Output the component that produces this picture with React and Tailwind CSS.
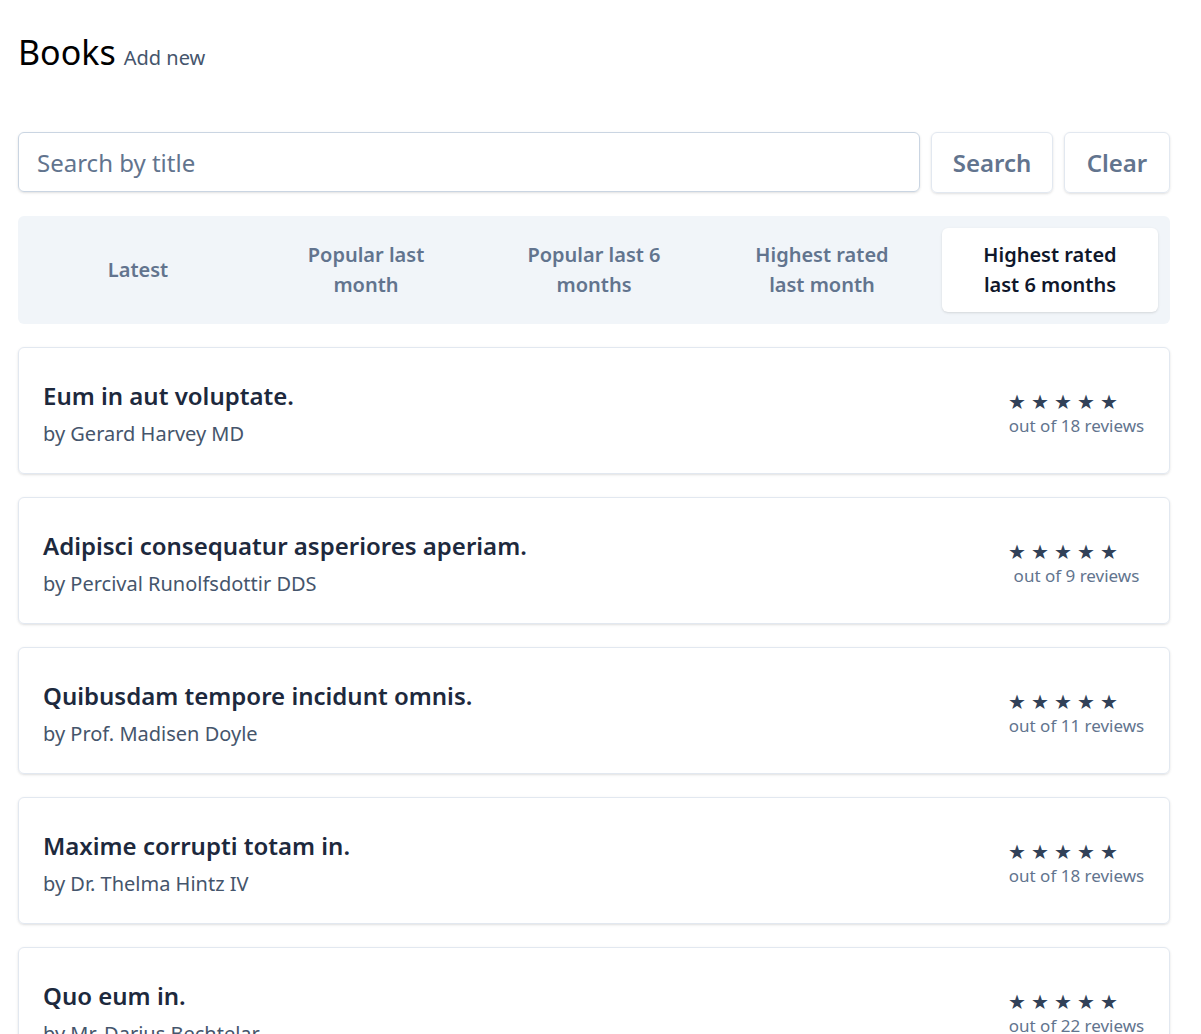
const books = [
  { title: "Eum in aut voluptate.", author: "Gerard Harvey MD", reviews: 18 },
  { title: "Adipisci consequatur asperiores aperiam.", author: "Percival Runolfsdottir DDS", reviews: 9 },
  { title: "Quibusdam tempore incidunt omnis.", author: "Prof. Madisen Doyle", reviews: 11 },
  { title: "Maxime corrupti totam in.", author: "Dr. Thelma Hintz IV", reviews: 18 },
  { title: "Quo eum in.", author: "Mr. Darius Bechtelar", reviews: 22 },
];

const filters = [
  "Latest",
  "Popular last month",
  "Popular last 6 months",
  "Highest rated last month",
  "Highest rated last 6 months",
];

export default function App() {
  const active = 4;

  return (
    <div className="min-h-screen bg-white pl-[18px] pr-[31px] pt-[32px] font-['Noto_Sans',sans-serif]">
      {/* Header */}
      <h1 className="flex items-baseline gap-2 text-[34px] leading-10 text-black">
        Books
        <a href="#" className="text-xl text-slate-600">Add new</a>
      </h1>

      {/* Search form */}
      <form className="mt-[60px] flex gap-[11px]">
        <input
          type="text"
          placeholder="Search by title"
          className="h-[60px] flex-1 rounded-md border border-slate-300 px-[18px] text-2xl text-slate-700 shadow-sm placeholder:text-slate-500 focus:outline-none"
        />
        <button className="h-[61px] w-[122px] rounded-md border border-slate-200 text-2xl font-semibold text-slate-500 shadow-sm">
          Search
        </button>
        <button className="h-[61px] w-[106px] rounded-md border border-slate-200 text-2xl font-semibold text-slate-500 shadow-sm">
          Clear
        </button>
      </form>

      {/* Filter tabs */}
      <div className="mt-[23px] grid grid-cols-5 gap-3 rounded-md bg-slate-100 p-3">
        {filters.map((label, i) => (
          <button
            key={label}
            className={`rounded-md px-10 py-3 text-xl font-semibold leading-[30px] ${
              i === active ? "bg-white text-slate-900 shadow-sm" : "text-slate-500"
            }`}
          >
            {label}
          </button>
        ))}
      </div>

      {/* Book list */}
      <ul className="mt-[23px] flex flex-col gap-[23px]">
        {books.map((book) => (
          <li
            key={book.title}
            className="flex items-center justify-between rounded-md border border-slate-200 px-6 pb-[25px] pt-8 shadow-sm"
          >
            <div>
              <div className="text-2xl font-semibold text-slate-800">{book.title}</div>
              <div className="mt-2 text-xl text-slate-600">by {book.author}</div>
            </div>
            <div className="text-center">
              <div className="pr-[22px] text-xl leading-6 tracking-[5px] text-slate-700">★★★★★</div>
              <div className="text-[17px] leading-6 text-slate-500">out of {book.reviews} reviews</div>
            </div>
          </li>
        ))}
      </ul>
    </div>
  );
}
